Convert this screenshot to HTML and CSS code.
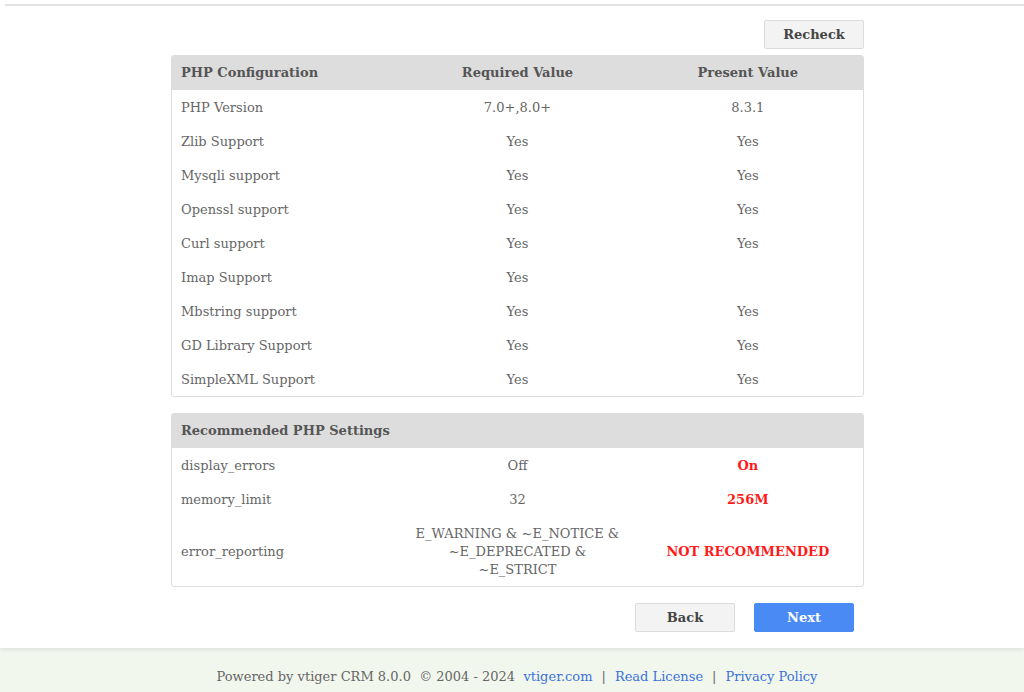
FILE: index.html
```html
<!DOCTYPE html>
<html>
    <head>
        <title>vtiger CRM - Installation</title>
        <link rel="stylesheet" href="styles.css">
    </head>
    <body>
        <div class="page">
            <div class="topline"></div>
            <div class="wrap">
                <div class="recheck-row">
                    <button class="btn">Recheck</button>
                </div>
                <table class="config">
                    <tr class="head">
                        <td>PHP Configuration</td>
                        <td class="mid">Required Value</td>
                        <td class="mid">Present Value</td>
                    </tr>
                    <tr><td>PHP Version</td><td class="mid">7.0+,8.0+</td><td class="mid">8.3.1</td></tr>
                    <tr><td>Zlib Support</td><td class="mid">Yes</td><td class="mid">Yes</td></tr>
                    <tr><td>Mysqli support</td><td class="mid">Yes</td><td class="mid">Yes</td></tr>
                    <tr><td>Openssl support</td><td class="mid">Yes</td><td class="mid">Yes</td></tr>
                    <tr><td>Curl support</td><td class="mid">Yes</td><td class="mid">Yes</td></tr>
                    <tr><td>Imap Support</td><td class="mid">Yes</td><td class="mid"></td></tr>
                    <tr><td>Mbstring support</td><td class="mid">Yes</td><td class="mid">Yes</td></tr>
                    <tr><td>GD Library Support</td><td class="mid">Yes</td><td class="mid">Yes</td></tr>
                    <tr><td>SimpleXML Support</td><td class="mid">Yes</td><td class="mid">Yes</td></tr>
                </table>
                <table class="config">
                    <tr class="head">
                        <td colspan="3">Recommended PHP Settings</td>
                    </tr>
                    <tr><td>display_errors</td><td class="mid">Off</td><td class="mid bad">On</td></tr>
                    <tr><td>memory_limit</td><td class="mid">32</td><td class="mid bad">256M</td></tr>
                    <tr class="tall"><td>error_reporting</td><td class="mid">E_WARNING &amp; ~E_NOTICE &amp; ~E_DEPRECATED &amp; ~E_STRICT</td><td class="mid bad">NOT RECOMMENDED</td></tr>
                </table>
                <div class="actions">
                    <button class="btn">Back</button>
                    <button class="btn primary">Next</button>
                </div>
            </div>
        </div>
        <div class="footer">
            Powered by vtiger CRM 8.0.0&nbsp; &copy; 2004 - 2024&nbsp;&nbsp;<a href="#">vtiger.com</a><span class="sep">|</span><a href="#">Read License</a><span class="sep">|</span><a href="#">Privacy Policy</a>
        </div>
    </body>
</html>
```

FILE: styles.css
```css
body{
    margin: 0;
    font-family: "DejaVu Serif", serif;
    font-size: 13px;
    color: #666;
    background-color: #f2f7ee;
}
.page{
    background-color: white;
    padding-top: 4px;
    padding-bottom: 16px;
    box-shadow: 0 2px 4px rgba(0,0,0,0.08);
    position: relative;
}
.topline{
    height: 2px;
    margin-left: 5px;
    background-color: #e2e2e2;
}
.wrap{
    width: 693px;
    margin: 0 160px 0 auto;
}
.recheck-row{
    display: flex;
    justify-content: flex-end;
    padding-top: 14px;
    margin-bottom: 6px;
}
.btn{
    width: 100px;
    height: 29px;
    font-family: "DejaVu Serif", serif;
    font-size: 13px;
    font-weight: bold;
    color: #444;
    background-color: #f3f3f3;
    border: 1px solid #dcdcdc;
    border-radius: 2px;
    cursor: pointer;
}
.btn.primary{
    background-color: #4a8af4;
    border-color: #4a8af4;
    color: white;
}
.config{
    width: 100%;
    border-collapse: separate;
    border-spacing: 0;
    border: 1px solid #ddd;
    border-radius: 3px;
    table-layout: fixed;
    margin-bottom: 16px;
}
.config td{
    padding: 9px 9px 8px;
    line-height: 17px;
}
.config .tall td{
    padding-bottom: 7px;
    line-height: 18px;
}
.config .head td{
    padding: 8px 9px;
    line-height: 18px;
    background-color: #dddddd;
    font-weight: bold;
    color: #555;
}
.mid{
    text-align: center;
}
.bad{
    color: #ff1a1a;
    font-weight: bold;
}
.actions{
    display: flex;
    justify-content: flex-end;
    gap: 19px;
    padding-right: 10px;
}
.footer{
    text-align: center;
    padding-top: 21px;
    padding-left: 10px;
    height: 23px;
}
.footer a{
    color: #3b72d9;
    text-decoration: none;
}
.sep{
    margin: 0 9px;
}
```
